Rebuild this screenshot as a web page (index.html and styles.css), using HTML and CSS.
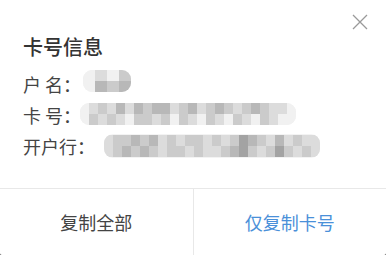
FILE: index.html
```html
<!DOCTYPE html>
<html>
  <head>
    <title>卡号信息</title>
    <meta charset="utf-8" />
    <link rel="stylesheet" href="styles.css">
  </head>
  <body>
    <div class="dialog">
      <button class="close-btn" aria-label="关闭">
        <svg width="16" height="16" viewBox="0 0 16 16">
          <path d="M1 1 L15 15 M15 1 L1 15" stroke="#9a9a9a" stroke-width="1.3" fill="none" />
        </svg>
      </button>
      <div class="dialog-body">
        <div class="dialog-title">卡号信息</div>
        <div class="info-row">
          <span class="label">户&nbsp;名：</span>
          <span class="mosaic name">
            <span class="m-row"><i class="b0"></i><i class="b1"></i><i class="b0"></i><i class="b2"></i></span>
            <span class="m-row"><i class="b0"></i><i class="b3"></i><i class="b2"></i><i class="b3"></i></span>
          </span>
        </div>
        <div class="info-row">
          <span class="label">卡&nbsp;号：</span>
          <span class="mosaic card">
            <span class="m-row"><i class="b0"></i><i class="b1"></i><i class="b2"></i><i class="b1"></i><i class="b3"></i><i class="b1"></i><i class="b3"></i><i class="b2"></i><i class="b3"></i><i class="b3"></i><i class="b1"></i><i class="b2"></i><i class="b3"></i><i class="b1"></i><i class="b2"></i><i class="b3"></i><i class="b2"></i><i class="b1"></i><i class="b2"></i><i class="b3"></i><i class="b2"></i><i class="b1"></i><i class="b1"></i><i class="b0"></i></span>
            <span class="m-row"><i class="b0"></i><i class="b2"></i><i class="b1"></i><i class="b2"></i><i class="b1"></i><i class="b0"></i><i class="b2"></i><i class="b2"></i><i class="b1"></i><i class="b2"></i><i class="b0"></i><i class="b2"></i><i class="b1"></i><i class="b0"></i><i class="b2"></i><i class="b1"></i><i class="b0"></i><i class="b2"></i><i class="b1"></i><i class="b0"></i><i class="b2"></i><i class="b1"></i><i class="b0"></i><i class="b0"></i></span>
          </span>
        </div>
        <div class="info-row">
          <span class="label">开户行：</span>
          <span class="mosaic bank">
            <span class="m-row"><i class="b1"></i><i class="b2"></i><i class="b2"></i><i class="b3"></i><i class="b2"></i><i class="b3"></i><i class="b1"></i><i class="b2"></i><i class="b1"></i><i class="b2"></i><i class="b2"></i><i class="b1"></i><i class="b2"></i><i class="b1"></i><i class="b2"></i><i class="b4"></i><i class="b3"></i><i class="b2"></i><i class="b1"></i><i class="b3"></i><i class="b1"></i><i class="b2"></i><i class="b1"></i><i class="b1"></i></span>
            <span class="m-row"><i class="b1"></i><i class="b2"></i><i class="b3"></i><i class="b2"></i><i class="b3"></i><i class="b2"></i><i class="b1"></i><i class="b2"></i><i class="b2"></i><i class="b1"></i><i class="b2"></i><i class="b1"></i><i class="b1"></i><i class="b2"></i><i class="b3"></i><i class="b4"></i><i class="b2"></i><i class="b1"></i><i class="b2"></i><i class="b4"></i><i class="b2"></i><i class="b1"></i><i class="b2"></i><i class="b1"></i></span>
          </span>
        </div>
      </div>
      <div class="dialog-footer">
        <button class="footer-btn">复制全部</button>
        <button class="footer-btn primary">仅复制卡号</button>
      </div>
    </div>
  </body>
</html>
```
FILE: styles.css
```css
html {
  background: #7a7a7a;
}
body {
  margin: 0;
  padding: 0;
  font-family: "Noto Sans CJK SC", "Liberation Sans", sans-serif;
  color: #333333;
}
.dialog {
  width: 386px;
  height: 255px;
  background: #ffffff;
  border-radius: 0 0 3px 3px;
  position: relative;
  display: flex;
  flex-direction: column;
  overflow: hidden;
}
.close-btn {
  position: absolute;
  top: 14px;
  right: 18px;
  padding: 0;
  border: none;
  background: none;
  width: 16px;
  height: 16px;
  cursor: pointer;
}
.close-btn svg {
  display: block;
}
.dialog-body {
  flex: 1;
  padding: 33px 23px 0;
}
.dialog-title {
  font-size: 20px;
  line-height: 28px;
  font-weight: 500;
  color: #333333;
  margin-bottom: 7px;
}
.info-row {
  display: flex;
  align-items: center;
  height: 31px;
  font-size: 18px;
  color: #444444;
}
.label {
  white-space: nowrap;
}

/* blurred values */
.mosaic {
  display: flex;
  flex-direction: column;
  border-radius: 9px;
  background: #f3f3f3;
  filter: blur(0.5px);
  overflow: hidden;
}
.m-row {
  display: flex;
  height: 11px;
}
.m-row i {
  width: 9px;
  height: 11px;
}
.m-row .b0 { background: #f1f1f1; }
.m-row .b1 { background: #dcdcdc; }
.m-row .b2 { background: #cbcbcb; }
.m-row .b3 { background: #b8b8b8; }
.m-row .b4 { background: #a3a3a3; }
.mosaic.name {
  margin-left: 2px;
  margin-top: -6px;
}
.mosaic.name .m-row i {
  width: 12px;
}
.mosaic.card {
  margin-left: -1px;
  margin-top: -2px;
}
.mosaic.bank {
  margin-left: 9px;
  padding: 1px 0;
}

.dialog-footer {
  display: flex;
  height: 66px;
  border-top: 1px solid #e8e8e8;
}
.footer-btn {
  flex: 1;
  border: none;
  background: #ffffff;
  font-family: "Noto Sans CJK SC", "Liberation Sans", sans-serif;
  font-size: 18px;
  color: #444444;
  padding: 0;
  cursor: pointer;
}
.footer-btn:first-child {
  border-right: 1px solid #e8e8e8;
}
.footer-btn.primary {
  color: #4a90d9;
}
```
